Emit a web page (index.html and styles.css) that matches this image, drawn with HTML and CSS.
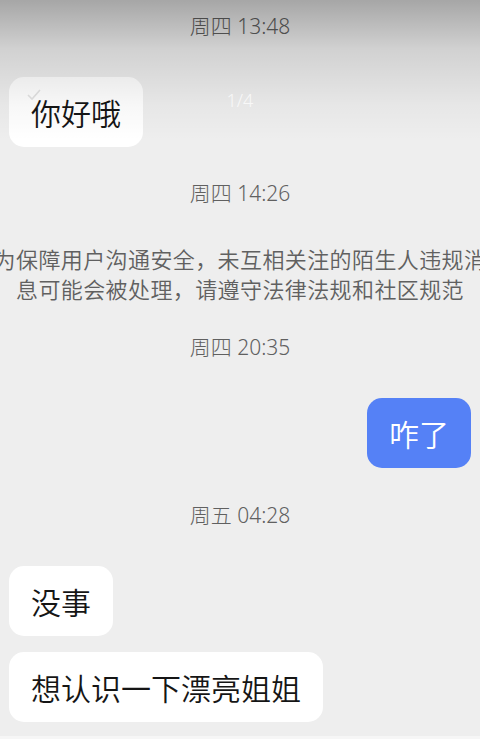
FILE: index.html
```html
<!DOCTYPE html>
<html lang="zh-CN">
<head>
<meta charset="utf-8">
<title>聊天</title>
<link rel="stylesheet" href="styles.css">
</head>
<body>
<div class="screen">
  <div class="chat">
    <div class="ts ts1">周四 13:48</div>
    <div class="bubble other b1">
      <svg class="check" width="14" height="12" viewBox="0 0 14 12"><path d="M1 6 L5 10 L13 1" fill="none" stroke="#d8d8d8" stroke-width="1.6"/></svg>
      你好哦
    </div>
    <div class="ts ts2">周四 14:26</div>
    <div class="notice">为保障用户沟通安全，未互相关注的陌生人违规消息可能会被处理，请遵守法律法规和社区规范</div>
    <div class="ts ts3">周四 20:35</div>
    <div class="bubble me b2">咋了</div>
    <div class="ts ts4">周五 04:28</div>
    <div class="bubble other b3">没事</div>
    <div class="bubble other b4">想认识一下漂亮姐姐</div>
  </div>
  <div class="shade"></div>
  <div class="pager">1/4</div>
</div>
</body>
</html>
```
FILE: styles.css
```css
html, body {
  margin: 0;
  padding: 0;
}
body {
  background: #eeeeee;
  width: 480px;
  height: 739px;
  overflow: hidden;
  font-family: "Noto Sans", "Noto Sans CJK SC", sans-serif;
}
.screen {
  position: relative;
  width: 480px;
  height: 739px;
  overflow: hidden;
  background: #eeeeee;
}
.screen::after {
  content: "";
  position: absolute;
  left: 0;
  right: 0;
  bottom: 0;
  height: 3px;
  background: #f6f6f6;
}
.chat {
  display: flex;
  flex-direction: column;
  align-items: flex-start;
  padding: 11px 9px 0;
}
.ts {
  align-self: center;
  font-size: 21px;
  font-weight: 300;
  line-height: 30px;
  color: #606060;
  white-space: nowrap;
}
.bubble {
  position: relative;
  font-family: "Noto Sans CJK SC", sans-serif;
  font-size: 30px;
  font-weight: 350;
  line-height: 42px;
  padding: 14px 22px;
  border-radius: 15px;
  background: #ffffff;
  color: #151515;
  white-space: nowrap;
}
.bubble.me {
  align-self: flex-end;
  background: #5581f6;
  color: #ffffff;
}
.check {
  position: absolute;
  left: 18px;
  top: 12px;
  opacity: 0.7;
}
.b1 { margin-top: 36px; }
.ts2 { margin-top: 31px; }
.notice {
  align-self: center;
  width: 496px;
  margin-top: 35px;
  font-family: "Noto Sans CJK SC", sans-serif;
  font-size: 22px;
  font-weight: 350;
  letter-spacing: 0.4px;
  line-height: 30px;
  color: #606060;
  text-align: center;
}
.ts3 { margin-top: 29px; }
.b2 { margin-top: 36px; }
.ts4 { margin-top: 32px; }
.b3 { margin-top: 36px; }
.b4 { margin-top: 16px; }
.shade {
  position: absolute;
  left: 0;
  top: 0;
  right: 0;
  height: 140px;
  background: linear-gradient(to bottom, rgba(0,0,0,0.3) 0%, rgba(0,0,0,0.12) 35%, rgba(0,0,0,0.03) 75%, rgba(0,0,0,0) 100%);
  pointer-events: none;
}
.pager {
  position: absolute;
  left: 0;
  right: 0;
  top: 88px;
  text-align: center;
  font-size: 18px;
  font-weight: 300;
  line-height: 24px;
  color: rgba(255,255,255,0.75);
}
```
